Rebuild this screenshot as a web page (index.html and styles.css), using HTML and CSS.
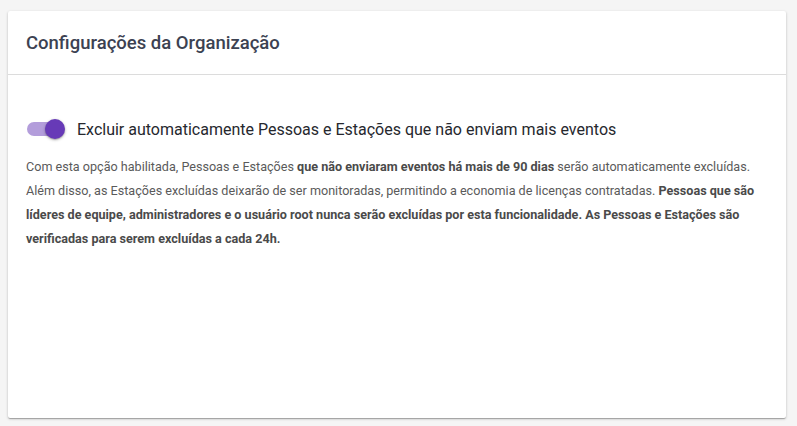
FILE: index.html
```html
<!DOCTYPE html>
<html lang="pt-BR">
<head>
<meta charset="utf-8">
<link rel="stylesheet" href="styles.css">
</head>
<body>
<div class="card">
  <div class="card-header">
    <h2 class="title">Configurações da Organização</h2>
  </div>
  <div class="card-body">
    <label class="toggle-row">
      <span class="switch">
        <span class="track"></span>
        <span class="thumb"></span>
      </span>
      <span class="toggle-label">Excluir automaticamente Pessoas e Estações que não enviam mais eventos</span>
    </label>
    <p class="desc">Com esta opção habilitada, Pessoas e Estações <b>que não enviaram eventos há mais de 90 dias</b> serão automaticamente excluídas. Além disso, as Estações excluídas deixarão de ser monitoradas, permitindo a economia de licenças contratadas. <b>Pessoas que são líderes de equipe, administradores e o usuário root nunca serão excluídas por esta funcionalidade. As Pessoas e Estações são verificadas para serem excluídas a cada 24h.</b></p>
  </div>
</div>
</body>
</html>
```
FILE: styles.css
```css
html, body {
  margin: 0;
  padding: 0;
  background: #f5f5f5;
  font-family: Roboto, "Noto Sans", sans-serif;
}
body {
  padding: 11px 11px 8px 8px;
}
.card {
  background: #fff;
  height: 407px;
  border-radius: 2px;
  box-shadow: 0 1px 3px rgba(0,0,0,0.2), 0 1px 1px rgba(0,0,0,0.14), 0 2px 1px -1px rgba(0,0,0,0.12);
  display: flex;
  flex-direction: column;
}
.card-header {
  height: 63px;
  border-bottom: 1px solid #dcdcdc;
  display: flex;
  align-items: center;
  padding: 0 18px;
}
.title {
  margin: 0;
  font-size: 18.5px;
  font-weight: 500;
  color: #3c4252;
}
.card-body {
  padding: 42px 18px 0 18px;
}
.toggle-row {
  display: flex;
  align-items: center;
  height: 24px;
}
.switch {
  position: relative;
  width: 38px;
  height: 24px;
  margin-left: 1px;
  margin-right: 12px;
  flex: none;
}
.track {
  position: absolute;
  left: 0;
  top: 5px;
  width: 34px;
  height: 14px;
  border-radius: 7px;
  background: #b39ddb;
}
.thumb {
  position: absolute;
  left: 18px;
  top: 2px;
  width: 20px;
  height: 20px;
  border-radius: 50%;
  background: #673ab7;
  box-shadow: 0 1px 3px rgba(0,0,0,0.3), 0 1px 1px rgba(0,0,0,0.14);
}
.toggle-label {
  font-size: 16px;
  color: #26282e;
}
.desc {
  margin: 14px 0 0 0;
  font-size: 12.6px;
  line-height: 24px;
  color: #5a5a5a;
}
.desc b {
  font-weight: 700;
  color: #4a4a4a;
}
```
